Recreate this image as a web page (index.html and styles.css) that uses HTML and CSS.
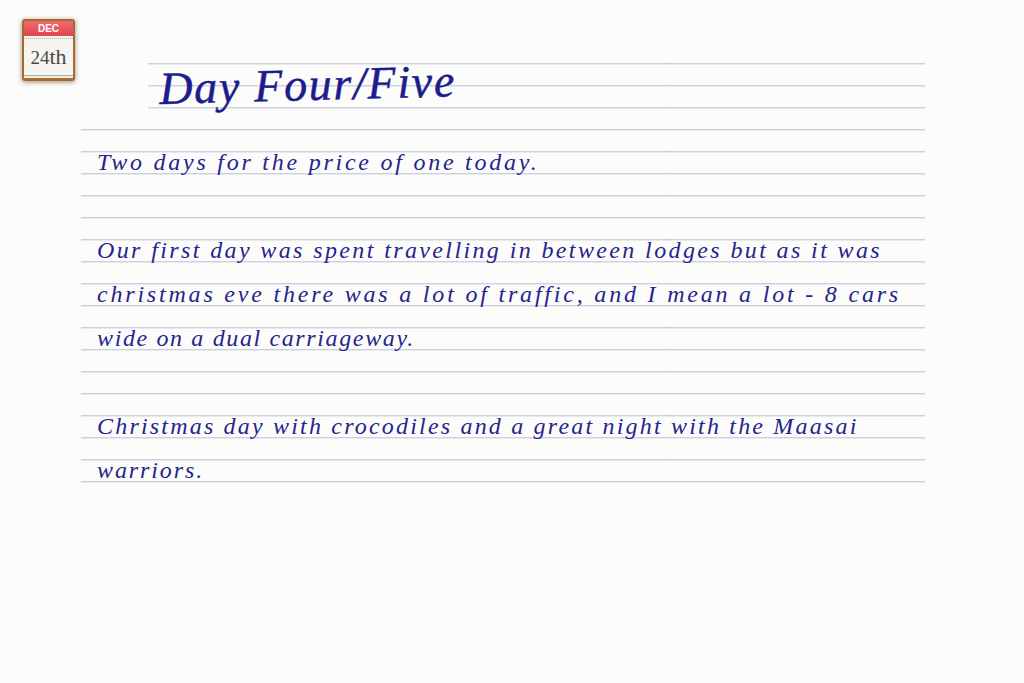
FILE: index.html
```html
<!DOCTYPE html>
<html>
<head>
    <meta charset="UTF-8">
    <title>Day Four/Five</title>
    <link rel="stylesheet" href="styles.css">
</head>
<body>
    <div class="date-icon">
        <div class="date-month">DEC</div>
        <div class="date-day"><span class="date-num">24</span>th</div>
        <div class="date-pages"></div>
    </div>
    <div class="page">
        <h1 class="title"><span class="title-text">Day Four/Five</span></h1>
        <div class="entry">
            <p><span class="l1">Two days for the price of one today.</span></p>
            <p><span class="l2">Our first day was spent travelling in between lodges but as it was</span><br><span class="l3">christmas eve there was a lot of traffic, and I mean a lot - 8 cars</span><br><span class="l4">wide on a dual carriageway.</span></p>
            <p><span class="l5">Christmas day with crocodiles and a great night with the Maasai</span><br><span class="l6">warriors.</span></p>
        </div>
    </div>
</body>
</html>
```

FILE: styles.css
```css
html, body {
    margin: 0;
    height: 100%;
}
body {
    background-color: #fcfcfb;
    position: relative;
    overflow: hidden;
}
.page {
    width: 925px;
    padding-top: 63px;
}
.title, .entry {
    background-image:
        linear-gradient(#bcbccc 1px, transparent 1px),
        linear-gradient(#cfcfe2 1px, #e8e8f1 1px, #e8e8f1 2px, transparent 2px);
    background-size: 2px 22px, 100% 22px;
    background-repeat: repeat-y;
}
.title {
    margin: 0 0 0 148px;
    height: 66px;
    padding-left: 12px;
    box-sizing: border-box;
    background-position: 518px 0, 0 0;
    font: italic 400 46px/52px "Liberation Serif", serif;
    color: #1c1c8c;
}
.title-text {
    display: inline-block;
    letter-spacing: 1.7px;
    -webkit-text-stroke: 0.5px #1c1c8c;
    transform: rotate(-1.5deg);
    transform-origin: left bottom;
}
.entry {
    margin-left: 81px;
    height: 354px;
    padding: 11px 0 0 16px;
    box-sizing: border-box;
    background-position: 585px 0, 0 0;
    font: italic 400 24px/44px "Liberation Serif", serif;
    color: #24248f;
}
.entry p {
    margin: 0 0 44px;
}
.l1 { letter-spacing: 2.75px; }
.l2 { letter-spacing: 2.38px; }
.l3 { letter-spacing: 2.8px; }
.l4 { letter-spacing: 1.63px; }
.l5 { letter-spacing: 2.19px; }
.l6 { letter-spacing: 1.9px; }

.date-icon {
    position: absolute;
    left: 22px;
    top: 19px;
    width: 49px;
    height: 57px;
    display: flex;
    flex-direction: column;
    border: 2px solid #a86a2e;
    border-bottom-width: 3px;
    border-radius: 3px;
    background: #f6f5f0;
    box-shadow: 0 1px 5px rgba(60,40,20,0.55);
}
.date-month {
    height: 15px;
    background: linear-gradient(#ee6a70, #dd464e);
    color: #fff;
    font: bold 10px/16px "Liberation Sans", sans-serif;
    text-align: center;
}
.date-day {
    flex: 1;
    margin-top: 2px;
    border-top: 1px dotted #b5b5ad;
    font: 22px/35px "Liberation Serif", serif;
    color: #4a4a48;
    text-align: center;
}
.date-num {
    font-size: 19px;
}
.date-pages {
    height: 4px;
    margin-bottom: 1px;
    background: repeating-linear-gradient(#b4b4aa 0, #b4b4aa 1px, #e4e4dc 1px, #e4e4dc 2px);
}
```
